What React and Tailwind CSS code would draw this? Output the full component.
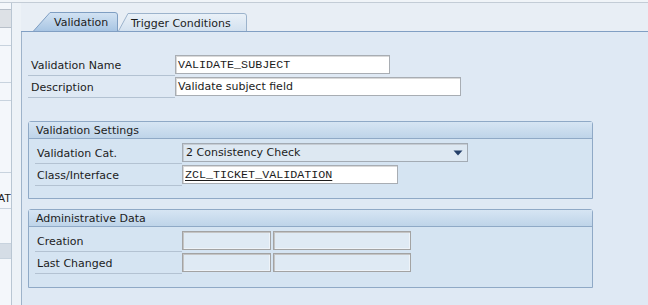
import React from "react";

const sans = "font-['DejaVu_Sans','Liberation_Sans',sans-serif]";
const mono = "font-['Liberation_Mono','Courier_New',monospace]";

function Row({ label, children, pl = "pl-[3px]" }) {
  return (
    <div className="flex h-[22px]">
      <div className={`flex w-[147px] items-center border-b border-[#b3c2d2] ${pl} pt-[4px] text-[11px] text-[#1c1c1c]`}>
        {label}
      </div>
      <div className="pt-[1px]">{children}</div>
    </div>
  );
}

function Input({ w, children, className = "" }) {
  return (
    <div
      className={`flex h-[19px] items-center border border-[#a8adb3] bg-white px-[2px] pt-[2px] shadow-[inset_1px_1px_0_#d9d9d9] ${w} ${className}`}
    >
      {children}
    </div>
  );
}

function ReadOnly({ w }) {
  return (
    <div className={`h-[19px] border border-[#a3a3a3] bg-[#dfeaf4] shadow-[inset_1px_1px_0_#c4c4c4,inset_-1px_-1px_0_#eef3f8] ${w}`} />
  );
}

function Group({ title, children, className = "" }) {
  return (
    <div className={`w-[565px] rounded-t-[3px] border border-[#8fa9c6] bg-[#d5e4f2] ${className}`}>
      <div className="flex h-[17px] items-center border-b border-[#8fa9c6] bg-gradient-to-b from-[#d6e5f3] to-[#bed4e9] pl-[7px] pt-[2px] text-[11px] text-[#1c1c1c]">
        {title}
      </div>
      <div className="pl-[6px]">{children}</div>
    </div>
  );
}

function Tab({ width, height, slant, active, label, pl }) {
  const id = active ? "gA" : "gB";
  return (
    <div className="relative flex items-center" style={{ width, height }}>
      <svg className="absolute inset-0" width={width} height={height}>
        <defs>
          <linearGradient id={id} x1="0" y1="0" x2="0" y2="1">
            <stop offset="0" stopColor={active ? "#d3e3f3" : "#eaf1f8"} />
            <stop offset="1" stopColor={active ? "#a8c5e3" : "#d3e1ef"} />
          </linearGradient>
        </defs>
        <path
          d={`M0.5,${height} L${slant},0.5 L${width - 3},0.5 Q${width - 0.5},0.5 ${width - 0.5},3 L${width - 0.5},${height}`}
          fill={`url(#${id})`}
          stroke={active ? "#7f9ec2" : "#9cb3cc"}
          strokeWidth="1"
        />
      </svg>
      <span className={`relative ${pl} pt-[4px] text-[11px] text-[#1c1c1c]`}>{label}</span>
    </div>
  );
}

function Sidebar() {
  return (
    <div className="flex w-[12px] flex-col border-r border-[#b9c6d3] bg-[#f4f7fb]">
      <div className="h-[6px]" />
      <div className="h-[19px] border-y border-[#b8c0ca] bg-[#dde1e6]" />
      <div className="h-[18px] border-b border-[#c8d3de]" />
      <div className="h-[37px] border-b border-[#c8d3de]" />
      <div className="h-[18px] border-b border-[#c8d3de]" />
      <div className="h-[72px] border-b border-[#c8d3de]" />
      <div className="flex h-[36px] items-center justify-end overflow-hidden whitespace-nowrap border-b border-[#c8d3de] pt-[16px] font-['Liberation_Sans',sans-serif] text-[11px] text-[#1c1c1c]">
        AT
      </div>
      <div className="h-[35px] border-b border-[#c8d3de]" />
      <div className="h-[15px] border-b border-[#c8d3de] bg-[#d5dde6]" />
      <div className="flex-1" />
    </div>
  );
}

export default function App() {
  return (
    <div className={`flex h-[305px] w-[648px] flex-col overflow-hidden bg-[#e8eef5] ${sans}`}>
      <div className="h-[3px] border-b border-[#c3ccd6] bg-[#f0f4f8]" />
      <div className="flex flex-1">
        <Sidebar />
        <div className="w-[9px] bg-[#edf2f7]" />
        <div className="flex flex-1 flex-col">
          {/* tab strip */}
          <div className="flex h-[29px] items-end border-b border-[#819fc3] pl-[12px]">
            <Tab width={85} height={19} slant={17} active label="Validation" pl="pl-[21px]" />
            <Tab width={129} height={18} slant={10} label="Trigger Conditions" pl="pl-[13px]" />
          </div>

          {/* panel body */}
          <div className="flex-1 border-l border-[#9eb3ca] bg-[#dfe9f4] pl-[6px] pt-[22px]">
            <Row label="Validation Name">
              <Input w="w-[215px]">
                <span className={`${mono} text-[11.7px] text-[#1c1c1c]`}>VALIDATE_SUBJECT</span>
              </Input>
            </Row>
            <Row label="Description">
              <Input w="w-[286px]">
                <span className="text-[11px] text-[#1c1c1c]">Validate subject field</span>
              </Input>
            </Row>

            <Group title="Validation Settings" className="mt-[23px]">
              <div className="pb-[12px] pt-[3px]">
                <Row label="Validation Cat." pl="pl-[2px]">
                  <div className="flex h-[19px] w-[286px] items-center justify-between border border-[#a3abb4] bg-[#dde8f2] pl-[3px] pr-[4px] pt-[2px] shadow-[inset_1px_1px_0_#c6ccd3]">
                    <span className="text-[11px] text-[#1c1c1c]">2 Consistency Check</span>
                    <svg width="10" height="6" viewBox="0 0 10 6" className="mb-[2px]">
                      <path d="M0.5,0.5 L9.5,0.5 L5,5.5 Z" fill="#243f69" />
                    </svg>
                  </div>
                </Row>
                <Row label="Class/Interface" pl="pl-[2px]">
                  <Input w="w-[216px]">
                    <span className={`${mono} text-[11.7px] text-[#1c1c1c] underline underline-offset-[2px]`}>
                      ZCL_TICKET_VALIDATION
                    </span>
                  </Input>
                </Row>
              </div>
            </Group>

            <Group title="Administrative Data" className="mt-[10px]">
              <div className="pb-[13px] pt-[3px]">
                <Row label="Creation" pl="pl-[2px]">
                  <div className="flex gap-[2px]">
                    <ReadOnly w="w-[89px]" />
                    <ReadOnly w="w-[138px]" />
                  </div>
                </Row>
                <Row label="Last Changed" pl="pl-[2px]">
                  <div className="flex gap-[2px]">
                    <ReadOnly w="w-[89px]" />
                    <ReadOnly w="w-[138px]" />
                  </div>
                </Row>
              </div>
            </Group>
          </div>
        </div>
      </div>
    </div>
  );
}
